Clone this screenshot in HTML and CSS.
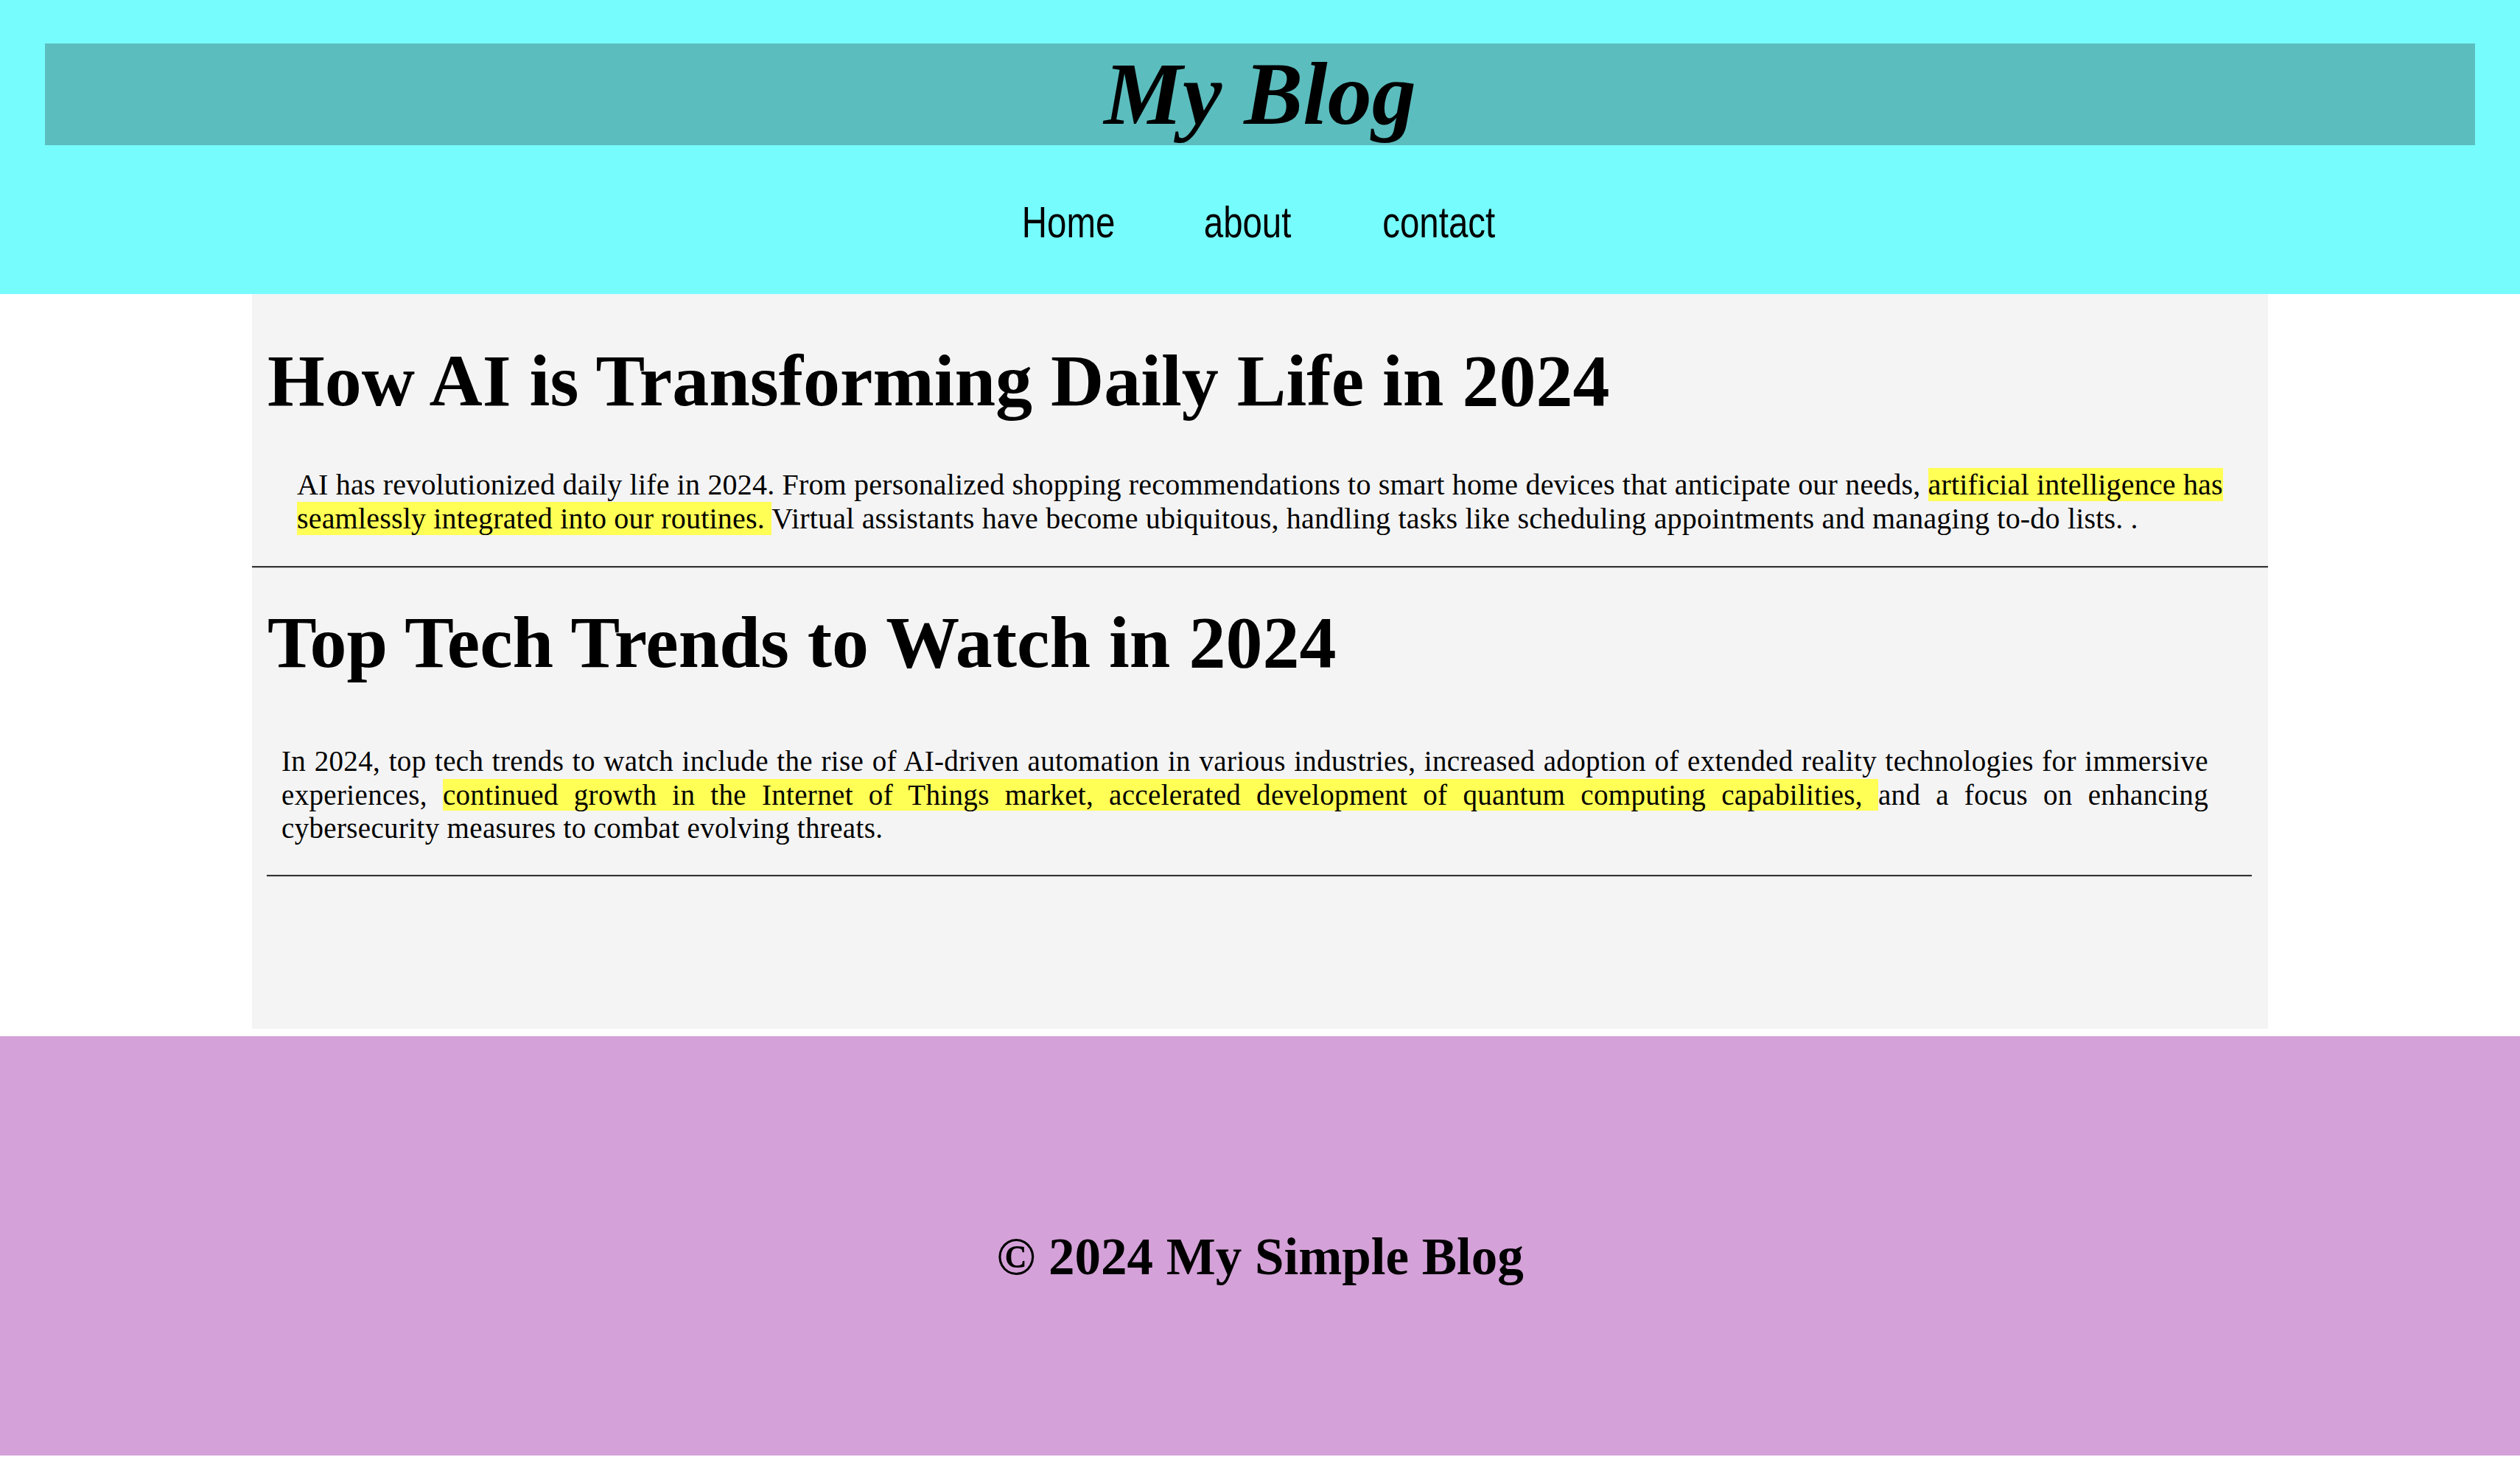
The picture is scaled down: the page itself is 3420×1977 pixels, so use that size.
FILE: index.html
```html
<!DOCTYPE html>
<html lang="en">
<head>
<meta charset="utf-8">
<title>My Blog</title>
<link rel="stylesheet" href="styles.css">
</head>
<body>
<header class="site-header">
  <div class="brand">
    <h1 class="brand-title">My Blog</h1>
  </div>
  <nav class="main-nav">
    <a class="nav-link" href="#">Home</a>
    <a class="nav-link" href="#">about</a>
    <a class="nav-link" href="#">contact</a>
  </nav>
</header>
<main class="posts">
  <article class="post post-first">
    <h2 class="post-title">How AI is Transforming Daily Life in 2024</h2>
    <p class="post-text post-text-first">AI has revolutionized daily life in 2024. From personalized shopping recommendations to smart home devices that anticipate our needs, <span class="mark">artificial intelligence has seamlessly integrated into our routines. </span>Virtual assistants have become ubiquitous, handling tasks like scheduling appointments and managing to-do lists. .</p>
  </article>
  <hr class="divider divider-full">
  <article class="post post-second">
    <h2 class="post-title">Top Tech Trends to Watch in 2024</h2>
    <p class="post-text post-text-second">In 2024, top tech trends to watch include the rise of AI-driven automation in various industries, increased adoption of extended reality technologies for immersive experiences, <span class="mark">continued growth in the Internet of Things market, accelerated development of quantum computing capabilities, </span>and a focus on enhancing cybersecurity measures to combat evolving threats.</p>
    <hr class="divider divider-inset">
  </article>
</main>
<footer class="site-footer">
  <h2 class="footer-text">&copy; 2024 My Simple Blog</h2>
</footer>
</body>
</html>
```
FILE: styles.css
```css
html, body {
  margin: 0;
  padding: 0;
}

body {
  background: #ffffff;
  color: #000000;
  font-family: "Liberation Serif", "Times New Roman", serif;
}

.site-header {
  background: #77fcfd;
  padding: 59px 61px 63px;
}

.brand {
  background: #5bbdbe;
  height: 138px;
  text-align: center;
}

.brand-title {
  margin: 0;
  font-size: 120px;
  font-weight: bold;
  font-style: italic;
  line-height: 138px;
}

.main-nav {
  margin-top: 70px;
  height: 69px;
  display: flex;
  justify-content: center;
  gap: 88px;
}

.nav-link {
  display: inline-block;
  color: #000000;
  text-decoration: none;
  font-family: "Liberation Sans", Arial, sans-serif;
  font-size: 60px;
  line-height: 69px;
  transform: scaleX(0.79);
  transform-origin: center;
}

.posts {
  width: 80%;
  margin: 0 auto;
  background: #f4f4f4;
  padding: 59px 0 206px;
}

.post-title {
  margin: 0;
  padding-left: 21px;
  font-size: 100px;
  font-weight: bold;
  line-height: 117px;
}

.post-text {
  margin: 0;
}

.post-text-first {
  margin-top: 60px;
  padding: 0 30px 0 61px;
  font-size: 40px;
  letter-spacing: 0.18px;
  line-height: 46px;
}

.post-text-second {
  margin-top: 80px;
  padding: 0 81px 0 40px;
  font-size: 39px;
  letter-spacing: 0.34px;
  line-height: 45.5px;
  text-align: justify;
}

.mark {
  background: #ffff55;
}

.divider {
  margin: 0;
  height: 0;
  border: 0;
  border-top: 2px solid #333333;
  border-bottom: 1px solid #cfcfcf;
}

.divider-full {
  margin-top: 41px;
  margin-bottom: 42px;
}

.divider-inset {
  margin: 40px 22px 0 20px;
}

.site-footer {
  background: #d4a1d8;
  margin-top: 10px;
  padding: 258px 0 229px;
  text-align: center;
}

.footer-text {
  margin: 0;
  font-size: 71px;
  font-weight: bold;
  line-height: 82px;
}
```
